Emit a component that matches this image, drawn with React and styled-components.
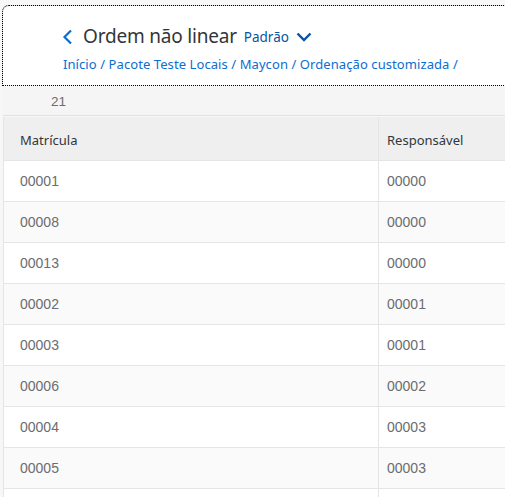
import styled, { createGlobalStyle } from "styled-components";

const GlobalStyle = createGlobalStyle`
  html, body {
    margin: 0;
    padding: 0;
    background: #f7f7f7;
    overflow: hidden;
  }
`;

const rows = [
  ["00001", "00000"],
  ["00008", "00000"],
  ["00013", "00000"],
  ["00002", "00001"],
  ["00003", "00001"],
  ["00006", "00002"],
  ["00004", "00003"],
  ["00005", "00003"],
];

function ChevronLeft() {
  return (
    <svg width="11" height="16" viewBox="0 0 11 16">
      <path d="M9 1.5 L2.5 8 L9 14.5" fill="none" stroke="#0a6ed1" strokeWidth="2.2" />
    </svg>
  );
}

function ChevronDown() {
  return (
    <svg width="16" height="10" viewBox="0 0 16 10">
      <path d="M1.5 1.5 L8 8 L14.5 1.5" fill="none" stroke="#0854a0" strokeWidth="2.4" />
    </svg>
  );
}

export default function App() {
  return (
    <>
      <GlobalStyle />
      <Page>
        <Header>
          <TitleRow>
            <BackButton>
              <ChevronLeft />
            </BackButton>
            <Title>Ordem não linear</Title>
            <Variant>
              Padrão
              <ChevronDown />
            </Variant>
          </TitleRow>
          <Breadcrumbs>
            Início / Pacote Teste Locais / Maycon / Ordenação customizada /
          </Breadcrumbs>
        </Header>
        <CountBar>21</CountBar>
        <Table>
          <HeadRow>
            <HeadCell $first>Matrícula</HeadCell>
            <HeadCell>Responsável</HeadCell>
          </HeadRow>
          {rows.map(([id, owner], i) => (
            <Row key={id} $alt={i % 2 === 1}>
              <Cell $first>{id}</Cell>
              <Cell>{owner}</Cell>
            </Row>
          ))}
          <Row>
            <Cell $first />
            <Cell />
          </Row>
        </Table>
      </Page>
    </>
  );
}

const Page = styled.div`
  width: 560px;
  padding-left: 3px;
  padding-top: 6px;
`;

const Header = styled.div`
  height: 79px;
  background: #ffffff;
  outline: 1px dotted #000;
  border-top-left-radius: 6px;
  box-shadow: -1px -1px 0 #d9d9d9;
  padding-left: 59px;
  box-sizing: border-box;
  padding-top: 16px;
`;

const TitleRow = styled.div`
  display: flex;
  align-items: center;
  height: 28px;
`;

const BackButton = styled.div`
  display: flex;
  align-items: center;
  width: 21px;
  padding-top: 1px;
`;

const Title = styled.div`
  font-family: "Noto Sans", sans-serif;
  font-size: 19px;
  color: #32363a;
  letter-spacing: -0.2px;
`;

const Variant = styled.div`
  display: flex;
  align-items: center;
  gap: 7px;
  margin-left: 7px;
  padding-top: 1px;
  font-family: "Noto Sans", sans-serif;
  font-size: 13.5px;
  color: #0854a0;
  svg {
    margin-top: 1px;
  }
`;

const Breadcrumbs = styled.div`
  margin-top: 5px;
  margin-left: 1px;
  font-family: "Noto Sans", sans-serif;
  font-size: 13px;
  letter-spacing: 0.08px;
  color: #0a6ed1;
  white-space: nowrap;
`;

const CountBar = styled.div`
  height: 31px;
  display: flex;
  align-items: center;
  padding-left: 48px;
  padding-top: 2px;
  box-sizing: border-box;
  background: #f5f5f5;
  border-bottom: 1px solid #e0e0e0;
  font-family: "Liberation Sans", Arial, sans-serif;
  font-size: 13.5px;
  color: #6a6d70;
`;

const Table = styled.div`
  border-left: 1px solid #e5e5e5;
  background: #ffffff;
`;

const HeadRow = styled.div`
  display: flex;
  height: 43px;
  margin-top: 1px;
  background: #efefef;
  border-bottom: 1px solid #e5e5e5;
`;

const HeadCell = styled.div`
  width: ${(p) => (p.$first ? "375px" : "auto")};
  flex: ${(p) => (p.$first ? "none" : "1")};
  box-sizing: border-box;
  display: flex;
  align-items: center;
  padding-left: ${(p) => (p.$first ? "16px" : "8px")};
  padding-top: 2px;
  border-right: ${(p) => (p.$first ? "1px solid #e5e5e5" : "none")};
  font-family: "Noto Sans", sans-serif;
  font-size: 13px;
  color: #32363a;
`;

const Row = styled.div`
  display: flex;
  height: 40px;
  background: ${(p) => (p.$alt ? "#fafafa" : "#ffffff")};
  border-bottom: 1px solid #e5e5e5;
`;

const Cell = styled.div`
  width: ${(p) => (p.$first ? "375px" : "auto")};
  flex: ${(p) => (p.$first ? "none" : "1")};
  box-sizing: border-box;
  display: flex;
  align-items: center;
  padding-left: ${(p) => (p.$first ? "16px" : "8px")};
  border-right: ${(p) => (p.$first ? "1px solid #e5e5e5" : "none")};
  font-family: "Liberation Sans", Arial, sans-serif;
  font-size: 14px;
  color: #6a6d70;
`;
